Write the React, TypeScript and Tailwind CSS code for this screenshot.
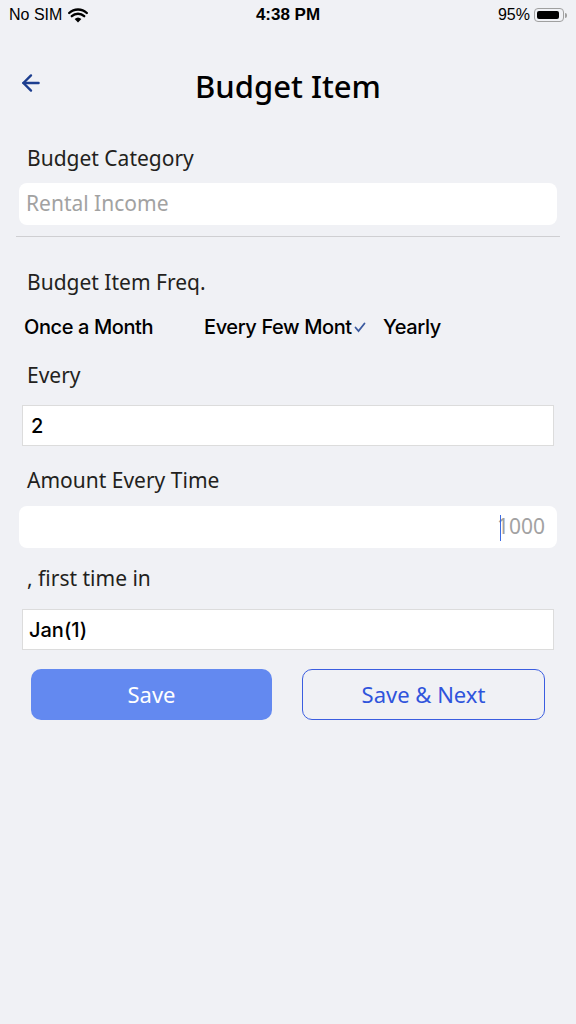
import { ArrowLeft } from "lucide-react";

const Label = ({ children }: { children: React.ReactNode }) => (
  <p className="px-[27px] text-[21px] leading-none text-[#231f20]">{children}</p>
);

const StatusBar = () => (
  <div className="flex h-[30px] items-center justify-between px-[9px] font-['Liberation_Sans',sans-serif] text-[16px] text-black">
    <div className="flex w-[120px] items-center gap-[6px]">
      <span>No SIM</span>
      <svg width="20" height="15" viewBox="0 0 20 15">
        <path d="M10 14.5 L6.6 11 A5 5 0 0 1 13.4 11 Z" fill="black" />
        <path d="M3.8 8.2 A9 9 0 0 1 16.2 8.2" stroke="black" strokeWidth="2.4" fill="none" strokeLinecap="round" />
        <path d="M1.2 5 A12.8 12.8 0 0 1 18.8 5" stroke="black" strokeWidth="2.4" fill="none" strokeLinecap="round" />
      </svg>
    </div>
    <span className="text-[17px] font-semibold">4:38 PM</span>
    <div className="flex w-[120px] items-center justify-end gap-[4px]">
      <span>95%</span>
      <div className="flex items-center">
        <div className="flex h-[14px] w-[30px] items-center rounded-[4px] border border-[#a0a0a0] p-[2px]">
          <div className="h-full w-[92%] rounded-[2px] bg-black" />
        </div>
        <div className="ml-[1px] h-[5px] w-[2px] rounded-r-sm bg-[#a0a0a0]" />
      </div>
    </div>
  </div>
);

export default function App() {
  return (
    <div className="min-h-[1024px] w-[576px] bg-[#f0f1f5] font-['Noto_Sans',sans-serif]">
      <StatusBar />

      <header className="relative flex h-[118px] items-center justify-center pb-[6px]">
        <button className="absolute left-[18px] top-[40px] text-[#1d3e8f]">
          <ArrowLeft size={26} strokeWidth={2.2} />
        </button>
        <h1 className="text-[31px] font-medium text-black">Budget Item</h1>
      </header>

      <Label>Budget Category</Label>
      <div className="mx-[19px] mt-[14px] flex h-[42px] items-center rounded-[8px] bg-white px-[7px] text-[21px] text-[#a2a2a2]">
        Rental Income
      </div>
      <div className="mx-[16px] mt-[11px] h-px bg-[#cfcfd2]" />

      <div className="mt-[35px]">
        <Label>Budget Item Freq.</Label>
      </div>
      <div className="mt-[19px] flex items-center font-['Inter',sans-serif] text-[20px] font-medium text-black">
        <span className="ml-[24px] w-[180px] tracking-[-0.4px]">Once a Month</span>
        <span className="flex w-[179px] items-center tracking-[-0.4px]">
          <span className="w-[151px] overflow-hidden whitespace-nowrap">Every Few Mont</span>
          <svg width="12" height="11" viewBox="0 0 12 11" className="-ml-[1px]">
            <path d="M1.5 5.5 L4.5 9 L10.5 1.5" stroke="#3b5aa0" strokeWidth="1.8" fill="none" strokeLinecap="round" />
          </svg>
        </span>
        <span className="tracking-[-0.4px]">Yearly</span>
      </div>

      <div className="mt-[23px]">
        <Label>Every</Label>
      </div>
      <div className="mx-[22px] mt-[19px] flex h-[41px] items-center border border-[#dcdcdc] bg-white px-[8px] font-['Inter',sans-serif] text-[20px] font-medium text-black">
        2
      </div>

      <div className="mt-[24px]">
        <Label>Amount Every Time</Label>
      </div>
      <div className="mx-[19px] mt-[15px] flex h-[42px] items-center justify-end rounded-[8px] bg-white px-[12px] text-[21px] text-[#a2a2a2]">
        <span className="relative">
          <span className="absolute left-[3px] top-[4px] h-[26px] w-[1.5px] bg-[#3d6be3]" />
          1000
        </span>
      </div>

      <div className="mt-[20px]">
        <Label>, first time in</Label>
      </div>
      <div className="mx-[22px] mt-[20px] flex h-[41px] items-center border border-[#dcdcdc] bg-white px-[6px] font-['Inter',sans-serif] text-[20px] font-medium text-black">
        Jan(1)
      </div>

      <div className="mt-[19px] flex gap-[30px] px-[31px]">
        <button className="h-[51px] flex-1 rounded-[10px] bg-[#6389f0] text-[22px] text-white">Save</button>
        <button className="h-[51px] flex-1 rounded-[10px] border border-[#3b5de0] text-[22px] text-[#2f54dc]">
          Save &amp; Next
        </button>
      </div>
    </div>
  );
}
